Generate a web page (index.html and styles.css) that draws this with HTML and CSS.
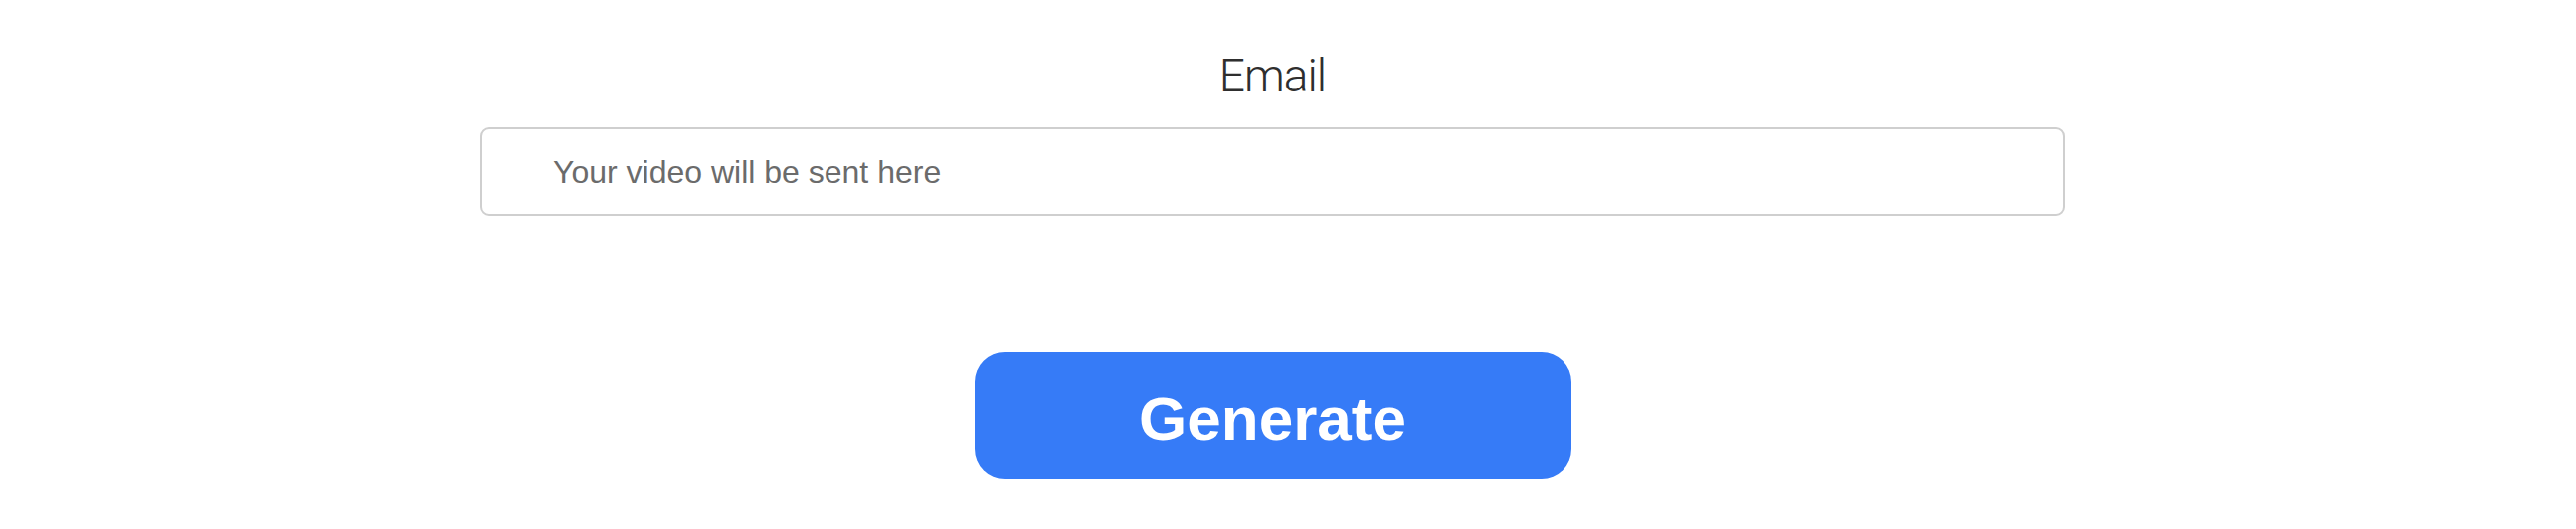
FILE: index.html
```html
<!DOCTYPE html>
<html lang="en">
<head>
<meta charset="utf-8">
<title>Generate</title>
<link rel="stylesheet" href="styles.css">
</head>
<body>
<div class="page">
  <form class="form">
    <label class="label" for="email">Email</label>
    <input class="email-input" id="email" type="email" placeholder="Your video will be sent here">
    <button class="generate" type="button">Generate</button>
  </form>
</div>
</body>
</html>
```

FILE: styles.css
```css
html, body {
  margin: 0;
  padding: 0;
  background: #ffffff;
}

.page {
  padding: 48px 31px 0 0;
  display: flex;
  justify-content: center;
}

.form {
  width: 1593px;
  display: flex;
  flex-direction: column;
  align-items: center;
}

.label {
  font-family: Roboto, "Liberation Sans", sans-serif;
  font-weight: 300;
  font-size: 46px;
  line-height: 56px;
  color: #2e2e2e;
  letter-spacing: -1px;
}

.email-input {
  margin-top: 24px;
  box-sizing: border-box;
  width: 100%;
  height: 89px;
  border: 2px solid #cfcfcf;
  border-radius: 9px;
  padding: 1px 0 0 71px;
  font-family: "Liberation Sans", Arial, sans-serif;
  font-size: 32px;
  color: #333333;
  outline: none;
  background: #ffffff;
}

.email-input::placeholder {
  color: #6b6b6b;
  opacity: 1;
}

.generate {
  margin-top: 137px;
  width: 600px;
  height: 128px;
  border: none;
  border-radius: 30px;
  background: #367bf7;
  color: #ffffff;
  font-family: "Liberation Sans", Arial, sans-serif;
  font-weight: 700;
  font-size: 62px;
  padding: 4px 0 0 0;
  cursor: pointer;
}
```
